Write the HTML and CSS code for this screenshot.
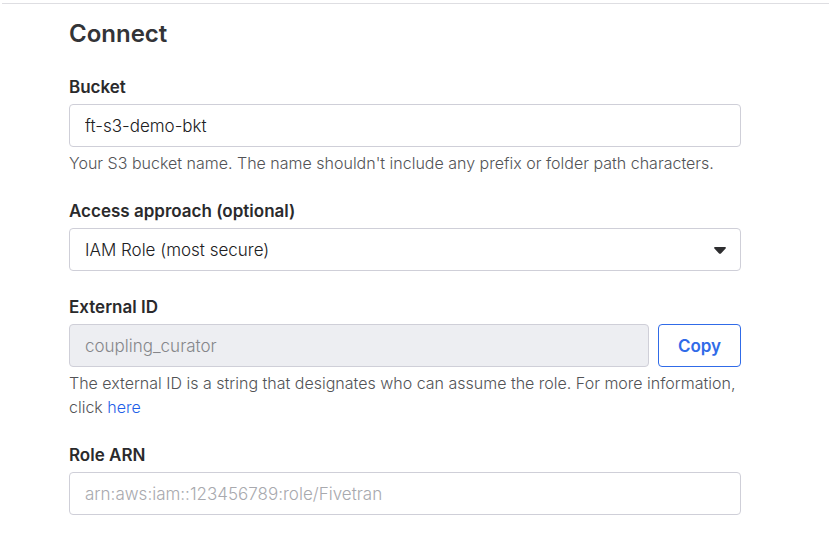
FILE: index.html
```html
<!DOCTYPE html>
<html lang="en">
<head>
<meta charset="utf-8">
<title>Connect</title>
<link rel="stylesheet" href="styles.css">
</head>
<body>
<main class="page">
<form class="form">
<h1 class="title">Connect</h1>
<div class="field">
<label class="label" for="bucket">Bucket</label>
<input class="control" id="bucket" type="text" value="ft-s3-demo-bkt">
<p class="hint">Your S3 bucket name. The name shouldn't include any prefix or folder path characters.</p>
</div>
<div class="field">
<label class="label" for="access">Access approach (optional)</label>
<div class="select">
<select class="control" id="access"><option>IAM Role (most secure)</option></select>
<svg class="caret" viewBox="0 0 12 7" aria-hidden="true"><path d="M1 0h10c.9 0 1.200 1 .6 1.600L7.200 6.200c-.7.7-1.700.7-2.400 0L.4 1.600C-.2 1 .1 0 1 0z"/></svg>
</div>
</div>
<div class="field">
<label class="label" for="external">External ID</label>
<div class="row">
<input class="control" id="external" type="text" value="coupling_curator" disabled>
<button class="copy" type="button">Copy</button>
</div>
<p class="hint">The external ID is a string that designates who can assume the role. For more information, click <a class="link" href="#">here</a></p>
</div>
<div class="field">
<label class="label" for="arn">Role ARN</label>
<input class="control" id="arn" type="text" placeholder="arn:aws:iam::123456789:role/Fivetran">
</div>
</form>
</main>
</body>
</html>
```
FILE: styles.css
```css
* {
  box-sizing: border-box;
}

body {
  margin: 0;
  background: #fff;
  color: #2a2a2c;
  font: 17px/24px Inter, "Liberation Sans", sans-serif;
}

.page {
  margin: 3px 0 0 2px;
  border-top: 1px solid #dedee2;
  padding: 14px 88px 16px 67px;
}

.form {
  display: flex;
  flex-direction: column;
  gap: 24px;
}

.title {
  margin: 0 0 1px;
  color: #333437;
  font-size: 24px;
  font-weight: 600;
  line-height: 32px;
}

.label {
  display: block;
  margin-bottom: 5px;
  font-weight: 600;
}

.control {
  display: block;
  width: 100%;
  height: 43px;
  border: 1px solid #cfcfd8;
  border-radius: 4px;
  padding: 0 15px;
  background: #fff;
  color: #202022;
  font: inherit;
  font-weight: 350;
}

.control::placeholder {
  color: #a8a9ae;
  opacity: 1;
}

.control:disabled {
  background: #edeef2;
  color: #85868a;
}

.select {
  position: relative;
}

.select .control {
  appearance: none;
}

.caret {
  position: absolute;
  top: 19px;
  right: 15px;
  width: 12px;
  height: 7px;
  fill: #2e2e30;
  pointer-events: none;
}

.row {
  display: flex;
  gap: 9px;
}

.copy {
  flex: none;
  width: 83px;
  border: 1px solid #306be8;
  border-radius: 4px;
  padding: 0;
  background: #fff;
  color: #306be8;
  font: inherit;
  font-weight: 600;
}

.hint {
  margin: 4px 0 0;
  color: #525356;
  font-size: 16px;
  font-weight: 300;
}

.link {
  color: #1f5fe8;
  text-decoration: none;
}
```
